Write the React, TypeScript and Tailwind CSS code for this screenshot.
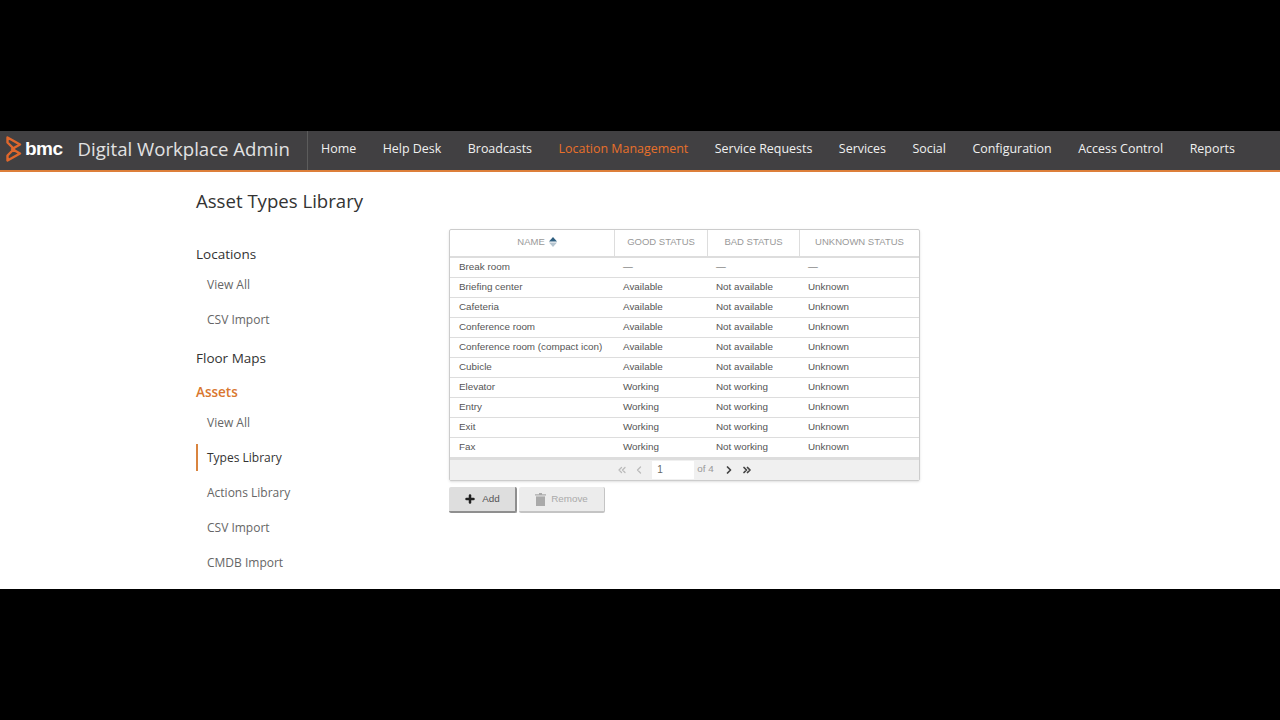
import { ChevronLeft, ChevronRight, ChevronsLeft, ChevronsRight, Plus } from "lucide-react"

const navItems = ["Home", "Help Desk", "Broadcasts", "Location Management", "Service Requests", "Services", "Social", "Configuration", "Access Control", "Reports"]

const rows = [
  ["Break room", "—", "—", "—"],
  ["Briefing center", "Available", "Not available", "Unknown"],
  ["Cafeteria", "Available", "Not available", "Unknown"],
  ["Conference room", "Available", "Not available", "Unknown"],
  ["Conference room (compact icon)", "Available", "Not available", "Unknown"],
  ["Cubicle", "Available", "Not available", "Unknown"],
  ["Elevator", "Working", "Not working", "Unknown"],
  ["Entry", "Working", "Not working", "Unknown"],
  ["Exit", "Working", "Not working", "Unknown"],
  ["Fax", "Working", "Not working", "Unknown"],
]

function SideLink({ label, active }: { label: string; active?: boolean }) {
  return (
    <div className={active ? "h-[27px] flex items-center border-l-2 border-[#d9843f] pl-[9px] text-[12px] font-medium text-[#333333]" : "h-[27px] flex items-center pl-[11px] text-[12px] text-[#666666]"}>
      {label}
    </div>
  )
}

function HeadCell({ label, className }: { label: string; className: string }) {
  return (
    <div className={`flex items-center justify-center gap-1 border-r border-[#dddddd] last:border-r-0 pb-[2px] text-[9.5px] text-[#999999] ${className}`}>
      {label}
      {label === "NAME" && (
        <svg width="8" height="10" viewBox="0 0 8 10">
          <path d="M4 0 L8 4.4 H0 Z" fill="#2f5f80" />
          <path d="M4 10 L8 5.6 H0 Z" fill="#b5c4cf" />
        </svg>
      )}
    </div>
  )
}

export default function App() {
  return (
    <div className="h-[720px] overflow-hidden bg-black pt-[131px] font-['Open_Sans',sans-serif]">
      <header className="h-[41px] flex items-center bg-[#414042] border-b-2 border-[#dd7f3a]">
        <div className="w-[308px] h-full flex items-center border-r border-[#5c5c5c] pl-[6px] pb-[3px] shrink-0 whitespace-nowrap">
          <svg width="16" height="26" viewBox="0 0 16 26" fill="none" stroke="#e0672c" strokeWidth="2.4" strokeLinejoin="round">
            <path d="M1.5 1.5 L14 8.5 L6 13 L14 17.5 L1.5 24.5 L1.5 19.5 L8 13 L1.5 6.5 Z" />
          </svg>
          <span className="ml-[3px] text-[19px] font-bold tracking-[-0.5px] text-white font-['Liberation_Sans',sans-serif]">bmc</span>
          <span className="ml-[15px] text-[18.6px] text-[#e2e2e2]">Digital Workplace Admin</span>
        </div>
        <nav className="flex items-center pl-[13px] pb-[3px] gap-[26.5px] text-[12.45px] whitespace-nowrap">
          {navItems.map((item) => (
            <span key={item} className={item === "Location Management" ? "text-[#e8702a]" : "text-[#f0f0f0]"}>
              {item}
            </span>
          ))}
        </nav>
      </header>

      <main className="h-[417px] bg-white pl-[196px] pt-[17px] overflow-hidden">
        <h1 className="text-[18.6px] leading-[24px] text-[#333333]">Asset Types Library</h1>
        <div className="flex">
          <aside className="w-[253px] shrink-0 pt-[29px]">
            <div className="h-[24px] flex items-center text-[13.5px] font-medium text-[#333333]">Locations</div>
            <div className="mt-[5px] flex flex-col gap-[8px]">
              <SideLink label="View All" />
              <SideLink label="CSV Import" />
            </div>
            <div className="mt-[13px] h-[24px] flex items-center text-[13.5px] font-medium text-[#333333]">Floor Maps</div>
            <div className="mt-[10px] h-[24px] flex items-center text-[13.5px] font-semibold text-[#d9772f]">Assets</div>
            <div className="mt-[5px] flex flex-col gap-[8px]">
              <SideLink label="View All" />
              <SideLink label="Types Library" active />
              <SideLink label="Actions Library" />
              <SideLink label="CSV Import" />
              <SideLink label="CMDB Import" />
            </div>
          </aside>

          <section className="w-[471px] pt-[16px] font-['Liberation_Sans',sans-serif]">
            <div className="border border-[#cccccc] rounded-[2px] shadow-sm">
              <div className="h-[28px] flex border-b-2 border-[#dddddd]">
                <HeadCell label="NAME" className="w-[165px] pl-[10px]" />
                <HeadCell label="GOOD STATUS" className="w-[93px]" />
                <HeadCell label="BAD STATUS" className="w-[92px]" />
                <HeadCell label="UNKNOWN STATUS" className="flex-1" />
              </div>
              {rows.map((row) => (
                <div key={row[0]} className="h-[20px] flex items-center border-b border-[#dddddd] text-[9.85px] text-[#555555] last:border-b-0">
                  <div className="w-[164px] pl-[9px] whitespace-nowrap">{row[0]}</div>
                  <div className="w-[93px] pl-[9px]">{row[1]}</div>
                  <div className="w-[92px] pl-[9px]">{row[2]}</div>
                  <div className="flex-1 pl-[9px]">{row[3]}</div>
                </div>
              ))}
              <div className="h-[22px] flex items-center justify-center bg-[#f0f0f0] border-t-2 border-[#dddddd] pb-[1px] text-[9.85px]">
                <div className="flex items-center">
                  <ChevronsLeft size={12} strokeWidth={2.5} className="text-[#bbbbbb]" />
                  <ChevronLeft size={12} strokeWidth={2.5} className="ml-[5px] text-[#bbbbbb]" />
                  <div className="ml-[7px] w-[42px] h-[18px] flex items-center pl-[5px] bg-white text-[#666666] text-[10px]">1</div>
                  <span className="ml-[3px] text-[#999999]">of 4</span>
                  <ChevronRight size={12} strokeWidth={3.5} className="ml-[9px] text-[#444444]" />
                  <ChevronsRight size={12} strokeWidth={3.5} className="ml-[6px] text-[#444444]" />
                </div>
              </div>
            </div>
            <div className="mt-[6px] flex gap-[2px]">
              <button className="w-[68px] h-[26px] flex items-center justify-center gap-[6px] bg-[#dedede] border-b-2 border-r-2 border-[#8f8f8f] rounded-[2px] text-[9.85px] text-[#555555]">
                <Plus size={12} strokeWidth={5} className="text-[#222222]" />
                Add
              </button>
              <button className="w-[86px] h-[26px] flex items-center justify-center gap-[5px] bg-[#ececec] border-b-2 border-r border-[#c4c4c4] rounded-[2px] text-[9.85px] text-[#aaaaaa]">
                <svg width="11" height="13" viewBox="0 0 11 13" fill="#aaaaaa">
                  <path d="M4 0 H7 V1.2 H11 V2.6 H0 V1.2 H4 Z" />
                  <path d="M1 3.4 H10 V13 H1 Z" />
                </svg>
                Remove
              </button>
            </div>
          </section>
        </div>
      </main>
    </div>
  )
}
